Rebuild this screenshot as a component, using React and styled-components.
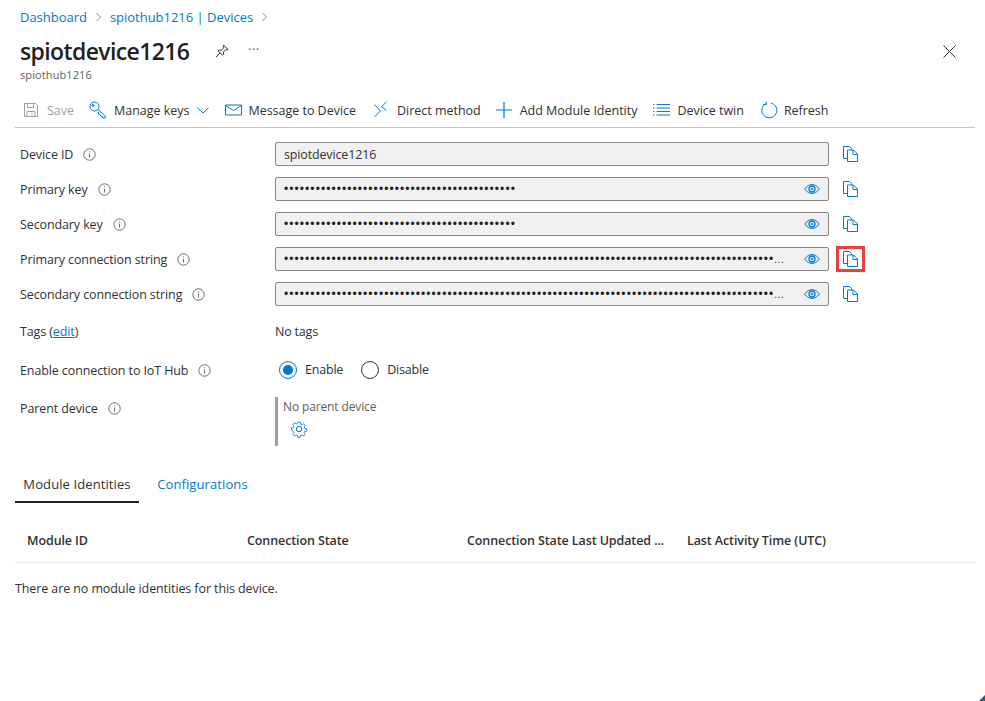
import React from 'react';
import styled, { createGlobalStyle } from 'styled-components';

const Global = createGlobalStyle`
  html, body { margin: 0; padding: 0; background: #fff; }
  body { font-family: "Open Sans", "Noto Sans", sans-serif; color: #323130; font-size: 12.5px; overflow: hidden; }
  * { box-sizing: border-box; }
`;
const Page = styled.div`width: 985px; height: 701px; padding: 9px 10px 0 15px; position: relative; overflow: hidden;`;
const Crumbs = styled.nav`display: flex; align-items: center; gap: 8px; height: 16px; margin-left: 5px; color: #0078d4; font-size: 13px; letter-spacing: -0.02px;`;
const Chevron = styled.svg`width: 7px; height: 10px; fill: none; stroke: #8a8886; stroke-width: 1;`;
const TitleRow = styled.div`display: flex; align-items: center; height: 32px; margin: 10px 0 0 5px; position: relative;`;
const Title = styled.h1`margin: 0; font-size: 23px; font-weight: 600; color: #201f1e; letter-spacing: -0.62px; width: 195px; line-height: 32px;`;
const Pin = styled.svg`width: 14px; height: 14px; fill: none; stroke: #323130; stroke-width: 1; margin-top: 0;`;
const More = styled.span`font-size: 13px; margin-left: 19px; margin-top: -4px; letter-spacing: .5px; color: #605e5c;`;
const Close = styled.svg`position: absolute; left: 923px; top: 10px; width: 13px; height: 13px; stroke: #323130; stroke-width: 1; fill: none;`;
const Sub = styled.div`margin: 0 0 0 5px; font-size: 11px; color: #605e5c; height: 15px; line-height: 15px; letter-spacing: 0.1px;`;
const Toolbar = styled.div`display: flex; align-items: center; width: 960px; height: 37px; margin-top: 9px; padding: 7px 0 5px 8px; border-bottom: 1px solid #c8c6c6;`;
const Tool = styled.div`display: flex; align-items: center; color: ${p => p.$off ? '#a19f9d' : '#323130'}; margin-right: ${p => p.$mr ?? 16}px; white-space: nowrap; font-size: 12.5px; letter-spacing: -0.02px;`;
const ToolIcon = styled.svg`width: ${p => p.$w ?? 18}px; height: 18px; margin-right: ${p => p.$gap ?? 7}px; fill: none; stroke: ${p => p.$off ? '#a19f9d' : '#0078d4'}; stroke-width: 1; flex: none;`;
const KeyChevron = styled.svg`width: 12px; height: 7px; margin: 0 16px 0 8px; fill: none; stroke: #0078d4;`;
const Form = styled.div`margin: 14px 0 0 5px;`;
const FieldRow = styled.div`display: flex; align-items: center; height: 24px; margin-bottom: 11px;`;
const LabelCell = styled.div`display: flex; align-items: center; width: 255px; flex: none; letter-spacing: -0.11px; white-space: nowrap;`;
const Info = styled.svg`width: 13px; height: 13px; margin-left: 10px; fill: none; stroke: #605e5c; stroke-width: .9; flex: none;`;
const Field = styled.div`width: 554px; height: 24px; flex: none; background: #f1f1f1; border: 1px solid #8a8886; border-radius: 2px; display: flex; align-items: center; justify-content: space-between; padding: 0 8px; letter-spacing: -0.15px;`;
const Dots = styled.span`white-space: nowrap; font-family: "Liberation Sans", sans-serif; font-size: 12px; letter-spacing: 1.07px; color: #201f1e; line-height: 16px;`;
const Ellipsis = styled.span`font-size: 10px; letter-spacing: 0.6px;`;
const Eye = styled.svg`width: 16px; height: 12px; fill: none; stroke: #0078d4; stroke-width: 1; flex: none; margin-left: auto;`;
const CopyBox = styled.div`width: 29px; height: 26px; margin-left: 7px; display: flex; align-items: center; justify-content: center; flex: none; border: ${p => p.$hl ? '3px solid #e8403a' : 'none'};`;
const CopyIcon = styled.svg`width: 15px; height: 16px; flex: none; fill: #fff; stroke: #0078d4; stroke-width: 1;`;
const PlainRow = styled.div`display: flex; align-items: center; height: 17px; margin-top: ${p => p.$mt}px;`;
const Link = styled.a`color: #0078d4; text-decoration: underline;`;
const Plain = styled.span`letter-spacing: -0.2px;`;
const Radios = styled.div`display: flex; align-items: center; margin: -2px 0 0 4px;`;
const Radio = styled.span`width: 18px; height: 18px; border-radius: 50%; flex: none; border: 1px solid ${p => p.$on ? '#0078d4' : '#323130'}; display: flex; align-items: center; justify-content: center; margin-right: 8px; &::after { content: ""; width: 10px; height: 10px; border-radius: 50%; background: ${p => p.$on ? '#0078d4' : 'transparent'}; }`;
const RadioLabel = styled.span`margin-right: 18px; letter-spacing: -0.2px;`;
const ParentRow = styled.div`display: flex; margin-top: 18px; height: 49px;`;
const ParentLabel = styled(LabelCell)`align-self: flex-start; height: 17px; margin-top: 3px;`;
const ParentBox = styled.div`border-left: 3px solid #a19f9d; padding: 1px 0 0 5px; height: 49px; color: #605e5c; font-size: 12px; letter-spacing: -0.13px; line-height: 17px;`;
const Gear = styled.svg`display: block; width: 18px; height: 18px; margin: 5px 0 0 7px; fill: none; stroke: #0078d4; stroke-width: 1;`;
const Tabs = styled.div`display: flex; margin-top: 25px; height: 32px;`;
const TabItem = styled.div`padding: 4px 0 0; height: 32px; font-size: 13px; letter-spacing: 0.1px; color: ${p => p.$on ? '#323130' : '#0078d4'}; width: ${p => p.$w}px; text-align: center; margin-right: 18px; border-bottom: ${p => p.$on ? '2px solid #201f1e' : 'none'};`;
const TableHead = styled.div`display: grid; grid-template-columns: 220px 220px 220px 200px; width: 960px; height: 60px; padding: 29px 0 0 12px; border-bottom: 1px solid #edebe9; font-weight: 600; letter-spacing: -0.1px; color: #323130;`;
const Empty = styled.div`margin-top: 17px; letter-spacing: -0.1px;`;
const Corner = styled.svg`position: absolute; right: 0; bottom: 0; width: 6px; height: 6px; fill: #2f5a80;`;

const InfoI = () => (
  <Info viewBox="0 0 13 13"><circle cx="6.5" cy="6.5" r="5.7" /><path d="M6.5 5.6v4M6.5 3.4v1" /></Info>
);
const CopyI = () => (
  <CopyIcon viewBox="0 0 15 16">
    <path d="M.5.5h6l2 2v10h-8z" />
    <path d="M4.5 4h6l4 4v7.5h-10z" />
    <path d="M10 4v4.5h4.5" fill="none" />
  </CopyIcon>
);
const EyeI = () => (
  <Eye viewBox="0 0 16 12">
    <path d="M.6 6C3 2.8 5.4 1.6 8 1.6S13 2.8 15.4 6C13 9.2 10.6 10.4 8 10.4S3 9.2.6 6z" />
    <circle cx="8" cy="6" r="3" strokeWidth="1.3" />
    <circle cx="8" cy="6" r=".9" />
  </Eye>
);

const rows = [
  { label: 'Device ID', text: 'spiotdevice1216' },
  { label: 'Primary key', dots: 44 },
  { label: 'Secondary key', dots: 44 },
  { label: 'Primary connection string', dots: 93, more: true, hl: true },
  { label: 'Secondary connection string', dots: 93, more: true },
];

export default function App() {
  return (
    <Page>
      <Global />
      <Crumbs>
        <span>Dashboard</span>
        <Chevron viewBox="0 0 7 10"><path d="M1.5 1l4 4-4 4" /></Chevron>
        <span>spiothub1216 | Devices</span>
        <Chevron viewBox="0 0 7 10"><path d="M1.5 1l4 4-4 4" /></Chevron>
      </Crumbs>
      <TitleRow>
        <Title>spiotdevice1216</Title>
        <Pin viewBox="0 0 14 14">
          <path d="M8.5 1l4.5 4.5-1 .6-1.2-.4-2.4 2.4.2 2.2-1 1L3.2 7l1-1 2.2.2 2.4-2.4-.4-1.2zM5 9l-4 4" />
        </Pin>
        <More>···</More>
        <Close viewBox="0 0 13 13"><path d="M.5.5l12 12M12.5.5l-12 12" /></Close>
      </TitleRow>
      <Sub>spiothub1216</Sub>
      <Toolbar>
        <Tool $off $mr={15}>
          <ToolIcon $off $w={16} $gap={8} viewBox="0 0 16 18">
            <path d="M1.5 2.5h11l2 2v11h-13z" /><path d="M4.5 2.5v4h6v-4M4 15.5v-5h8v5M9 12v2" />
          </ToolIcon>
          Save
        </Tool>
        <Tool $mr={0}>
          <ToolIcon viewBox="0 0 18 18">
            <circle cx="5.5" cy="5.5" r="4.5" /><circle cx="4" cy="4.5" r="1" />
            <path d="M9 8.5l7.5 6.5-.5 2h-2.5l-.5-2h-1.5l-.5-1.5-1.5-.5V11" />
          </ToolIcon>
          Manage keys
          <KeyChevron viewBox="0 0 12 7"><path d="M.5.8L6 6l5.5-5.2" /></KeyChevron>
        </Tool>
        <Tool $mr={18}>
          <ToolIcon $w={17} $gap={6} viewBox="0 0 17 18"><path d="M.5 4h16v10H.5z" /><path d="M.5 4.5l8 5 8-5" /></ToolIcon>
          Message to Device
        </Tool>
        <Tool $mr={15}>
          <ToolIcon $w={13} $gap={10} viewBox="0 0 13 18">
            <path d="M.5 3.5l6 6.5-6 6M12.5.8L7.5 5.8l5 3.5" />
          </ToolIcon>
          Direct method
        </Tool>
        <Tool $mr={16}>
          <ToolIcon $w={16} $gap={8} viewBox="0 0 16 18"><path d="M8 1v16M0 9h16" strokeWidth="1.2" /></ToolIcon>
          Add Module Identity
        </Tool>
        <Tool $mr={16}>
          <ToolIcon $w={17} $gap={7} viewBox="0 0 17 18"><path d="M3.5 3.5H17M3.5 7H17M3.5 10.5H17M3.5 14H17M0 3.5h1.5M0 7h1.5M0 10.5h1.5M0 14h1.5" /></ToolIcon>
          Device twin
        </Tool>
        <Tool>
          <ToolIcon $w={18} $gap={6} viewBox="0 0 18 18" strokeWidth="1.2"><path d="M6 2.6A7.5 7.5 0 1 0 11 2M6.3.5v3h-3" /></ToolIcon>
          Refresh
        </Tool>
      </Toolbar>
      <Form>
        {rows.map(r => (
          <FieldRow key={r.label}>
            <LabelCell>{r.label}<InfoI /></LabelCell>
            <Field>
              {r.text ? <span>{r.text}</span> : <Dots>{'•'.repeat(r.dots)}{r.more ? <Ellipsis>...</Ellipsis> : null}</Dots>}
              {r.dots ? <EyeI /> : null}
            </Field>
            <CopyBox $hl={r.hl}><CopyI /></CopyBox>
          </FieldRow>
        ))}
        <PlainRow $mt={17}>
          <LabelCell>Tags (<Link>edit</Link>)</LabelCell>
          <Plain>No tags</Plain>
        </PlainRow>
        <PlainRow $mt={22}>
          <LabelCell>Enable connection to IoT Hub<InfoI /></LabelCell>
          <Radios>
            <Radio $on /><RadioLabel>Enable</RadioLabel>
            <Radio /><RadioLabel>Disable</RadioLabel>
          </Radios>
        </PlainRow>
        <ParentRow>
          <ParentLabel>Parent device<InfoI /></ParentLabel>
          <ParentBox>
            No parent device
            <Gear viewBox="0 0 18 18">
              <circle cx="9" cy="9" r="2.7" />
              <path d="M7.6 1h2.8l.4 2.3 1.5.7 2-1.3 2 2-1.3 2 .6 1.5 2.3.4v2.8l-2.3.4-.6 1.5 1.3 2-2 2-2-1.3-1.5.6-.4 2.3H7.6l-.4-2.3-1.5-.6-2 1.3-2-2 1.3-2-.6-1.5L.1 10.4V7.6l2.3-.4.6-1.5-1.3-2 2-2 2 1.3 1.5-.7z" transform="translate(1.4 1.4) scale(.85)" />
            </Gear>
          </ParentBox>
        </ParentRow>
      </Form>
      <Tabs>
        <TabItem $on $w={124}>Module Identities</TabItem>
        <TabItem $w={91}>Configurations</TabItem>
      </Tabs>
      <TableHead>
        <span>Module ID</span>
        <span>Connection State</span>
        <span>Connection State Last Updated ...</span>
        <span>Last Activity Time (UTC)</span>
      </TableHead>
      <Empty>There are no module identities for this device.</Empty>
      <Corner viewBox="0 0 6 6"><path d="M6 0v6H0z" /></Corner>
    </Page>
  );
}
